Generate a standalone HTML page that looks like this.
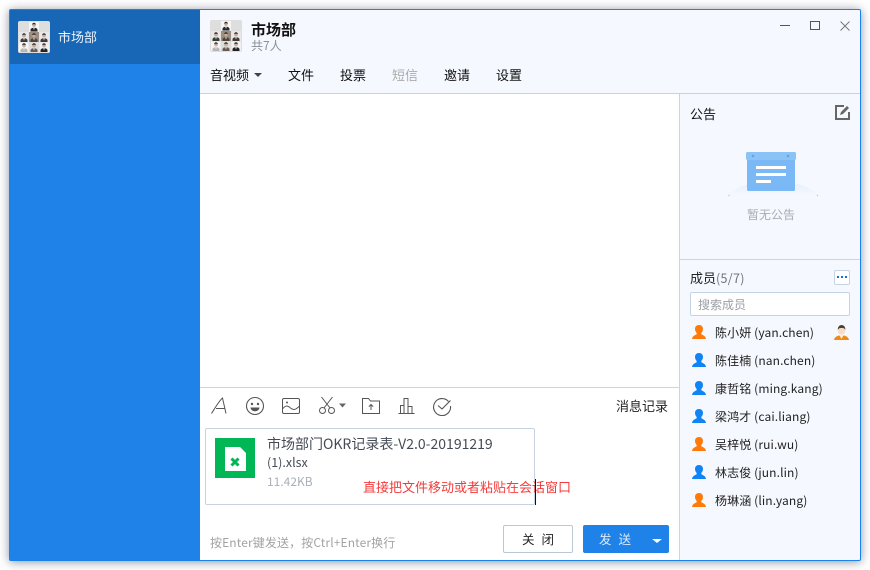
<!DOCTYPE html>
<html><head><meta charset="utf-8">
<style>
*{box-sizing:border-box}
html,body{margin:0;padding:0;width:870px;height:570px;overflow:hidden;background:#fff}
body{font-family:"Noto Sans CJK SC","Liberation Sans",sans-serif;font-size:13px;color:#222;position:relative}
.a{position:absolute;white-space:nowrap}
#win{position:absolute;left:9px;top:9px;width:852px;height:552px;border:1px solid #1a82ec;border-radius:2px;background:#f5f8fe;box-shadow:0 1px 10px rgba(60,75,100,.6)}
.nav{top:66px;font-size:13px;line-height:18px;color:#111}
.m{left:715px;font-size:12px;line-height:18px;color:#222;letter-spacing:.12px}
svg{position:absolute;display:block}
</style></head><body>
<svg width="0" height="0" style="position:absolute"><defs>
<g id="p"><path d="M1.500 10V8.500C1.500 7 3.200 6.300 5 6.300s3.500.7 3.500 2.200V10z"/><path d="M4.200 6.300h1.600L5 8.500z" fill="#eee"/><circle cx="5" cy="3.700" r="1.700" fill="#c9ab96"/><path d="M3.200 3.400C3.200 2 4 1.300 5 1.300s1.800.7 1.800 2.100C6 2.600 4 2.600 3.200 3.400z" fill="#2c2826"/></g>
<g id="av"><rect width="32" height="32" rx="2" fill="#dedede"/>
<rect x="11" y="1" width="10" height="9.500" fill="#f6f6f6"/><use href="#p" x="11" y="0.500" fill="#2a2a2a"/>
<rect x="1" y="11" width="9.500" height="10" fill="#e8e8e8"/><use href="#p" x="1" y="11" fill="#3a3d3c"/>
<rect x="11" y="11" width="10" height="10" fill="#9a8d82"/><use href="#p" x="11" y="11" fill="#4f433b"/>
<rect x="21.500" y="11" width="9.500" height="10" fill="#e8e8e8"/><use href="#p" x="21" y="11" fill="#44383a"/>
<rect x="1" y="21.500" width="9.500" height="9.500" fill="#f6f6f6"/><use href="#p" x="1" y="21" fill="#b5b5b5"/>
<rect x="11" y="21.500" width="10" height="9.500" fill="#dcdcdc"/><use href="#p" x="11" y="21" fill="#6a5a52"/>
<rect x="21.500" y="21.500" width="9.500" height="9.500" fill="#f0f0f0"/><use href="#p" x="21" y="21" fill="#222"/></g>
<path id="u" d="M7 0c2.500 0 4 1.700 4 4 0 1.600-.8 3.100-1.700 4v1c.3.900 4.200 1.300 4.700 5H0c.5-3.700 4.400-4.100 4.700-5V8C3.800 7.100 3 5.600 3 4c0-2.300 1.500-4 4-4z"/>
<linearGradient id="arc" x1="0" y1="0" x2="0" y2="1"><stop offset="0" stop-color="#e3eefb"/><stop offset="1" stop-color="#f5f8fe"/></linearGradient>
</defs></svg>

<div id="win"></div>
<!-- sidebar -->
<div class="a" style="left:10px;top:10px;width:190px;height:550px;background:#1e82e8"></div>
<div class="a" style="left:10px;top:10px;width:190px;height:54px;background:#1767b6"></div>
<svg style="left:18px;top:21px" width="32" height="32"><use href="#av"/></svg>
<div class="a" style="left:58px;top:28px;color:#eaf3ff;font-size:13px;line-height:18px">市场部</div>

<!-- header -->
<svg style="left:210px;top:20px" width="32" height="32"><use href="#av"/></svg>
<div class="a" style="left:251px;top:20px;font-size:15px;font-weight:bold;line-height:20px;color:#111">市场部</div>
<div class="a" style="left:251px;top:38px;font-size:12px;line-height:16px;color:#8a8f98">共7人</div>
<div class="a nav" style="left:210px">音视频</div>
<div class="a" style="left:254px;top:73px;width:0;height:0;border:4px solid transparent;border-top:4px solid #444;border-bottom:0"></div>
<div class="a nav" style="left:288px">文件</div>
<div class="a nav" style="left:340px">投票</div>
<div class="a nav" style="left:392px;color:#aaa">短信</div>
<div class="a nav" style="left:444px">邀请</div>
<div class="a nav" style="left:496px">设置</div>
<!-- window controls -->
<div class="a" style="left:780px;top:25px;width:10px;height:1px;background:#555"></div>
<div class="a" style="left:810px;top:21px;width:10px;height:9px;border:1px solid #555"></div>
<svg style="left:840px;top:21px" width="10" height="10"><path d="M.5.500l9 9M9.500.500l-9 9" stroke="#777" fill="none"/></svg>
<div class="a" style="left:200px;top:93px;width:660px;height:1px;background:#c9d2de"></div>

<!-- chat -->
<div class="a" style="left:200px;top:94px;width:480px;height:466px;background:#fff"></div>
<div class="a" style="left:200px;top:387px;width:480px;height:1px;background:#c9d5e2"></div>
<!-- toolbar icons -->
<svg style="left:210px;top:396px" width="20" height="20" fill="none" stroke="#555" stroke-width="1"><path d="M1.500 17.500C5 12 9 5 12.500 2l3.500 15.500M6 12.500h9"/></svg>
<svg style="left:245px;top:396px" width="20" height="20" fill="none" stroke="#555" stroke-width="1.100"><circle cx="10" cy="10" r="8.500"/><circle cx="7" cy="8" r="1.200" fill="#555" stroke="none"/><circle cx="13" cy="8" r="1.200" fill="#555" stroke="none"/><path d="M5.500 11.500h9c-.5 5-8.500 5-9 0z" fill="#555" stroke="none"/></svg>
<svg style="left:281px;top:397px" width="20" height="18" fill="none" stroke="#555"><rect x="1.500" y="1.500" width="17" height="15" rx="1.500"/><path d="M1.500 12c3-4 5-3.500 8-1s5 2 9-2"/><circle cx="6" cy="5.500" r="1" fill="#555" stroke="none"/></svg>
<svg style="left:318px;top:396px" width="30" height="20" fill="none" stroke="#555"><circle cx="4.500" cy="14.500" r="3"/><circle cx="13.500" cy="14.500" r="3"/><path d="M6 12L14.500 1M12 12L3.500 1"/><path d="M21 7.500h7l-3.500 4z" fill="#666" stroke="none"/></svg>
<svg style="left:361px;top:397px" width="20" height="18" fill="none" stroke="#555"><path d="M1.500 16.500V1.500h6l2 2.500h9v12.500z"/><path d="M10 13V7.500M7.800 9.700L10 7.500l2.200 2.200"/></svg>
<svg style="left:398px;top:397px" width="18" height="18" fill="none" stroke="#555"><path d="M.5 16.500h16M2.500 16.500v-8h3.500v8M6 16.500V1.500h4v15M10 16.500v-7h4v7"/></svg>
<svg style="left:432px;top:396px" width="20" height="20" fill="none" stroke="#555" stroke-width="1.100"><path d="M16.500 5.500A8.500 8.500 0 1 0 18.500 10"/><path d="M6 9.500l4 3.500 8.500-8.500"/></svg>
<div class="a" style="left:616px;top:397px;font-size:13px;line-height:18px;color:#222">消息记录</div>

<!-- file card -->
<div class="a" style="left:205px;top:428px;width:330px;height:77px;border:1px solid #c7d3e0;border-radius:2px;background:#fff"></div>
<svg style="left:215px;top:438px" width="40" height="40"><rect width="40" height="40" fill="#00b655"/><path d="M10 9h15l6 6v18H10z" fill="#fff"/><path d="M16.500 20.500l7 7M23.500 20.500l-7 7" stroke="#00b655" stroke-width="3" fill="none"/></svg>
<div class="a" style="left:267px;top:435px;font-size:14px;line-height:18px;color:#444b55">市场部门OKR记录表-V2.0-20191219</div>
<div class="a" style="left:267px;top:453px;font-size:12.500px;line-height:18px;color:#444b55">(1).xlsx</div>
<div class="a" style="left:267px;top:474px;font-size:12px;line-height:16px;color:#aab0b8">11.42KB</div>
<div class="a" style="left:363px;top:478px;font-size:13px;line-height:18px;color:#f53b3b">直接把文件移动或者粘贴在会话窗口</div>
<div class="a" style="left:535px;top:479px;width:1px;height:26px;background:#111"></div>

<!-- bottom -->
<div class="a" style="left:210px;top:534px;font-size:12px;line-height:17px;color:#a3a3a3;letter-spacing:.12px">按Enter键发送，按Ctrl+Enter换行</div>
<div class="a" style="left:503px;top:525px;width:70px;height:28px;border:1px solid #b9c7d6;border-radius:2px;background:#fff;text-align:center;font-size:12.500px;line-height:25px;color:#222;letter-spacing:7px;padding-left:7px">关闭</div>
<div class="a" style="left:583px;top:525px;width:86px;height:28px;border-radius:2px;background:#1e82e8"></div>
<div class="a" style="left:599px;top:525px;font-size:12.500px;line-height:27px;color:#dcebfb;letter-spacing:7px">发送</div>
<div class="a" style="left:652px;top:539px;width:0;height:0;border:5px solid transparent;border-top:4px solid #fff;border-bottom:0"></div>

<!-- right panel -->
<div class="a" style="left:679px;top:94px;width:1px;height:466px;background:#c9d5e2"></div>
<div class="a" style="left:690px;top:105px;font-size:13px;line-height:18px;color:#111">公告</div>
<svg style="left:835px;top:105px" width="15" height="15" fill="none"><path d="M9 1H1v13h13V7" stroke="#666" stroke-width="2"/><path d="M5 10l1-3 6-6 2 2-6 6z" fill="#666"/></svg>
<svg style="left:725px;top:150px" width="96" height="48"><path d="M4 45C15 34 30 31 47 31s35 3 46 14z" fill="url(#arc)"/><circle cx="4" cy="45.500" r=".7" fill="#c4c4c4"/><circle cx="92.500" cy="45.500" r=".7" fill="#c4c4c4"/><rect x="22" y="8" width="48" height="33" rx="1.500" fill="#7ab9f5"/><rect x="21" y="2" width="50" height="8" rx="1.500" fill="#8cc3f7"/><circle cx="28" cy="6" r="1.300" fill="#5fa4e8"/><circle cx="63" cy="6" r="1.300" fill="#5fa4e8"/><rect x="31" y="16" width="30" height="3" fill="#fff"/><rect x="31" y="23" width="30" height="3" fill="#fff"/><rect x="31" y="30" width="15" height="3" fill="#fff"/></svg>
<div class="a" style="left:747px;top:206px;font-size:12px;line-height:17px;color:#a9adb2">暂无公告</div>
<div class="a" style="left:680px;top:259px;width:180px;height:1px;background:#c9d5e2"></div>
<div class="a" style="left:690px;top:269px;font-size:13px;line-height:18px;color:#222">成员<span style="color:#6d7480;font-size:12.500px;letter-spacing:.3px">(5/7)</span></div>
<div class="a" style="left:834px;top:270px;width:16px;height:15px;border:1px solid #c5d3e2;border-radius:2px;background:#fff"></div>
<div class="a" style="left:837px;top:276px;width:2px;height:2px;background:#1a6fd0;box-shadow:4px 0 #1a6fd0,8px 0 #1a6fd0"></div>
<div class="a" style="left:690px;top:292px;width:160px;height:24px;border:1px solid #c5d3e6;border-radius:2px;background:#fff;font-size:12px;line-height:23px;color:#9a9fa6;padding-left:7px">搜索成员</div>

<svg style="left:692px;top:325px" width="14" height="14" fill="#ff7a08"><use href="#u"/></svg>
<div class="a m" style="top:324px">陈小妍 (yan.chen)</div>
<svg style="left:834px;top:325px" width="15" height="15"><path d="M0 15c.5-3 3-4 5-4.500h5c2 .5 4.500 1.500 5 4.500z" fill="#f08a10"/><path d="M5.500 10.500h4L7.500 14z" fill="#ffe7c8"/><circle cx="7.500" cy="6" r="3.600" fill="#f6dcc0"/><path d="M3.800 5c-.2-3.500 2-5 3.800-5s4 1.500 3.700 5c-1-1.500-1-2-3.700-2s-2.800.5-3.800 2z" fill="#4a4038"/></svg>
<svg style="left:692px;top:353px" width="14" height="14" fill="#0f84f5"><use href="#u"/></svg>
<div class="a m" style="top:352px">陈佳楠 (nan.chen)</div>
<svg style="left:692px;top:381px" width="14" height="14" fill="#0f84f5"><use href="#u"/></svg>
<div class="a m" style="top:380px">康哲铭 (ming.kang)</div>
<svg style="left:692px;top:409px" width="14" height="14" fill="#0f84f5"><use href="#u"/></svg>
<div class="a m" style="top:408px">梁鸿才 (cai.liang)</div>
<svg style="left:692px;top:437px" width="14" height="14" fill="#ff7a08"><use href="#u"/></svg>
<div class="a m" style="top:436px">吴梓悦 (rui.wu)</div>
<svg style="left:692px;top:465px" width="14" height="14" fill="#0f84f5"><use href="#u"/></svg>
<div class="a m" style="top:464px">林志俊 (jun.lin)</div>
<svg style="left:692px;top:493px" width="14" height="14" fill="#ff7a08"><use href="#u"/></svg>
<div class="a m" style="top:492px">杨琳涵 (lin.yang)</div>
</body></html>
